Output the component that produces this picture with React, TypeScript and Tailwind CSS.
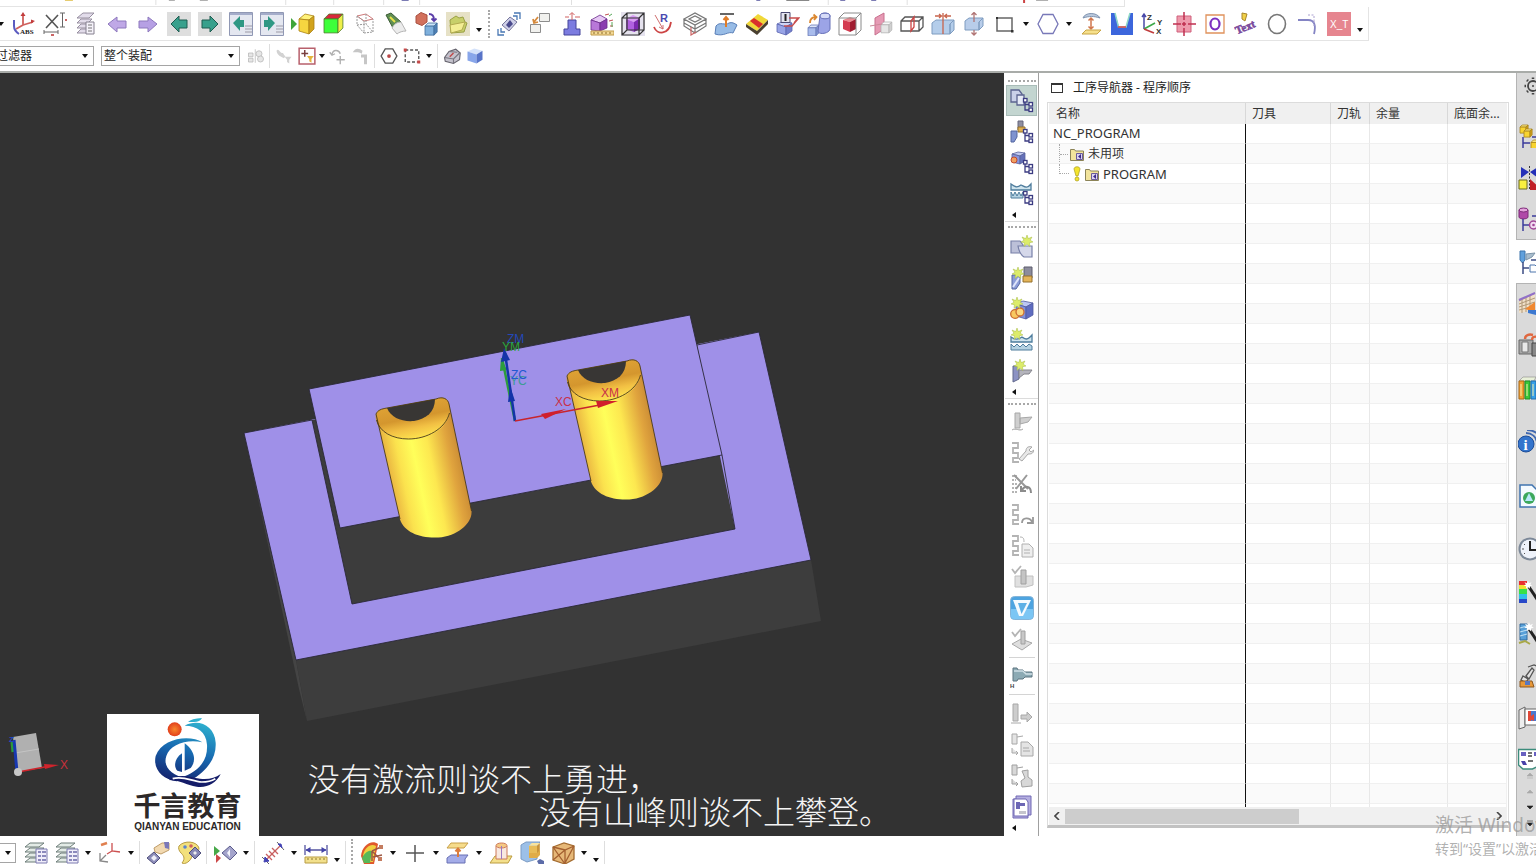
import React from "react";

type CubeProps = {
  x: number;
  y: number;
  s: number;
  top: string;
  front: string;
  side: string;
  line?: string;
};

// small shaded box used by most of the modelling icons
function Cube({ x, y, s, top, front, side, line = "none" }: CubeProps) {
  const d = s * 0.35;
  return (
    <g stroke={line} strokeWidth="0.8" strokeLinejoin="round">
      <path d={`M${x} ${y + d}l${d} ${-d}h${s}l${-d} ${d}z`} fill={top} />
      <path d={`M${x} ${y + d}h${s}v${s}h${-s}z`} fill={front} />
      <path d={`M${x + s} ${y + d}l${d} ${-d}v${s}l${-d} ${d}z`} fill={side} />
    </g>
  );
}

const star = "M0-6l1.3 3.6L5-4 3.200-.8 6 1 2.600 1.700 2.800 5.500 0 3l-3 2.400.4-3.700L-6 1l3-1.700L-5-4l3.700 1.600z";

const tree = (
  <g fill="#fff" stroke="#3c3c82" strokeWidth="1.300">
    <path d="M15 12v9h4M15 15.500h4" fill="none" />
    <rect x="13.500" y="9.500" width="3.500" height="3.500" />
    <rect x="19" y="13.500" width="3.500" height="3.500" />
    <rect x="19" y="19" width="3.500" height="3.500" />
  </g>
);

const snake = (
  <path d="M2 2h6v5H3v5h5v5H3v4h6" fill="none" stroke="#b4b4b4" strokeWidth="1.800" />
);

const greenArrowLeft = "M2 12l8-8v4h8v8h-8v4z";
const greenArrowRight = "M22 12l-8-8v4H6v8h8v4z";

const icons: Record<string, React.ReactNode> = {
  abs: (
    <>
      <path d="M11 3v10l-7 4M11 13l10-3" fill="none" stroke="#d0605c" strokeWidth="1.800" />
      <path d="M11 0l2.500 4h-5zM23 9l-4-1.500v4z" fill="#c23c3c" />
      <path d="M2 8v6c0 4 2 6 5 8" fill="none" stroke="#5b5bc0" strokeWidth="2" />
      <text x="8" y="22" fontSize="7" fontWeight="bold" fontFamily="Liberation Serif, serif" fill="#222">ABS</text>
    </>
  ),
  dim: (
    <>
      <path d="M3 3l12 13M15 3L3 16" stroke="#555" strokeWidth="1.600" />
      <path d="M17 1h5M17 15h5M19.500 1v14M1 18v4M15 18v4M1 20h14" stroke="#666" fill="none" />
      <path d="M22 8h2M8 23h3" stroke="#c66" strokeWidth="2" />
    </>
  ),
  list: (
    <>
      <path d="M3 6l6-5h11l-5 5zM3 11l4-4h11l-4 4zM3 16l4-4h10l-4 4zM3 21l4-4h10l-4 4z" fill="#e2dcea" stroke="#8e8798" strokeWidth="0.900" />
      <path d="M12 10h8v12h-8z" fill="#f5f2fa" stroke="#85808f" />
      <path d="M14 13h4M14 16h4M14 19h4" stroke="#777" />
    </>
  ),
  back: <path d="M3 12l9-7v4h9v7h-9v4z" fill="#bfa8e6" stroke="#8d78bd" />,
  forward: <path d="M21 12l-9-7v4H3v7h9v4z" fill="#b6a0e4" stroke="#8d78bd" />,
  prev: (
    <>
      <path d="M0 0h24v24H0z" fill="#dedede" />
      <path d={greenArrowLeft} transform="translate(2 0)" fill="#38a08c" stroke="#1f5c50" />
    </>
  ),
  next: (
    <>
      <path d="M0 0h24v24H0z" fill="#dedede" />
      <path d={greenArrowRight} transform="translate(-2 0)" fill="#38a08c" stroke="#1f5c50" />
    </>
  ),
  prevWindow: (
    <>
      <path d="M.5.500h23v23H.5z" fill="#e4e7f0" stroke="#9098b4" />
      <path d="M1 2h22" stroke="#a5adca" strokeWidth="2" />
      <path d="M4 11l7-7v4h4v7h-4v4z" fill="#2f9884" />
      <path d="M16 14h7M16 17h7M16 20h7" stroke="#b4b4be" strokeWidth="1.600" />
    </>
  ),
  nextWindow: (
    <>
      <path d="M.5.500h23v23H.5z" fill="#e4e7f0" stroke="#9098b4" />
      <path d="M1 2h22" stroke="#a5adca" strokeWidth="2" />
      <path d="M15 11L8 4v4H4v7h4v4z" fill="#2f9884" />
      <path d="M16 14h7M16 17h7M16 20h7" stroke="#b4b4be" strokeWidth="1.600" />
    </>
  ),
  showBody: (
    <>
      <path d="M0 6l6 6-6 6z" fill="#3fa53b" />
      <path d="M8 7l6-5 9 2-5 4z" fill="#fff27a" stroke="#a98214" strokeWidth="0.800" />
      <path d="M8 7l10 1v14L8 19z" fill="#f6d640" stroke="#a98214" strokeWidth="0.800" />
      <path d="M18 8l5-4v13l-5 5z" fill="#d2a31c" stroke="#a98214" strokeWidth="0.800" />
    </>
  ),
  colorCube: <Cube x={2} y={2} s={14} top="#d8283c" front="#3dff3a" side="#efef4a" line="#4c7a2c" />,
  wire: (
    <g fill="none">
      <path d="M4 4l9-2 7 5-9 2z" stroke="#cf7a7a" />
      <path d="M4 4v9l7 8V9zM11 21l9-1V7M13 2v10l7 8M4 13l9-1" stroke="#9a9a9a" strokeDasharray="2 1" />
    </g>
  ),
  torch: (
    <>
      <path d="M2 3l5-2 10 9-8 6z" fill="#5f8f52" stroke="#3c5b36" />
      <path d="M6 5l5 5" stroke="#e8e04a" strokeWidth="2" />
      <path d="M8 16c2-4 5-6 9-6l5 9c-3 0-7 1-9 3z" fill="#ececec" stroke="#b5b5b5" />
    </>
  ),
  replace: (
    <>
      <path d="M1 4l5-3.500L12 3v7l-5 3.500L1 11z" fill="#d2705c" stroke="#a85040" />
      <path d="M14 2c4 0 5 2 5 6M16.500 6.500L19 9l2.500-2.500" fill="none" stroke="#5a3ca8" strokeWidth="1.800" />
      <Cube x={10} y={11} s={9} top="#cbe3f6" front="#7fb0dc" side="#4e80b4" line="#3f6c9c" />
    </>
  ),
  folder: (
    <>
      <path d="M0 0h24v24H0z" fill="#e6e1c6" />
      <path d="M4 8l6-4 3 2 4-1 2 5 2 1-3 9-13 1z" fill="#c7cf6a" stroke="#9aa044" />
      <path d="M4 13l15-3-3 8-11 3z" fill="#f3ee94" stroke="#b2ab50" />
    </>
  ),
  moveFace: (
    <>
      <path d="M5 13l8-8 7 5-8 9z" fill="#cfd0e8" stroke="#77779c" />
      <path d="M9 13l4-5 3 4-4 4z" fill="#4a4a8c" />
      <path d="M17 1l6 0v6M16 4l4 0v4M1 17v6h6M4 16v4h4" fill="none" stroke="#4a78b4" strokeWidth="1.300" />
    </>
  ),
  copyFace: (
    <>
      <path d="M11.500 1.500h10v8h-10zM2.500 12.500h10v8h-10z" fill="#f1f1ee" stroke="#8d8d8d" />
      <path d="M10 5l-4 5M5 7l1 4 4-1" fill="none" stroke="#d68a3c" strokeWidth="1.800" />
    </>
  ),
  emboss: (
    <>
      <path d="M9 8h8v9h4v6H5v-6h4z" fill="#7c7ce0" stroke="#44449a" />
      <path d="M13 8V1M10.500 3L13 .5 15.500 3M6 5h4M16 5h5" fill="none" stroke="#d06060" />
    </>
  ),
  measureBody: (
    <>
      <path d="M1 8l9-5 7 4-7 4z" fill="#e6c8f4" stroke="#6b2c8c" strokeWidth="0.800" />
      <path d="M1 8l9 3v8l-9-1z" fill="#b878d8" stroke="#6b2c8c" strokeWidth="0.800" />
      <path d="M10 11l7-4v9l-7 3z" fill="#8a3cb0" stroke="#6b2c8c" strokeWidth="0.800" />
      <path d="M1 19h23v4H1z" fill="#f2d896" stroke="#c09a48" />
      <path d="M4 20v2M8 20v2M12 20v2M16 20v2M20 20v2" stroke="#8c6c2c" />
      <path d="M15 3l4-1M19 9l4-1M20 14l3 0" stroke="#c05050" />
      <path d="M19 4l3-2M22 10v5" stroke="#58a858" />
    </>
  ),
  boundBox: (
    <>
      <path d="M0 0h24v24H0z" fill="#e5e2ee" />
      <path d="M5 7l7-4 7 3-6 4z" fill="#d89af4" />
      <path d="M5 7l8 3v10l-8-3z" fill="#b060e0" />
      <path d="M13 10l6-4v11l-6 3z" fill="#7c28b0" />
      <path d="M1 6l5-5h17v17l-5 5H1zM1 6h17v17M18 6l5-5M6 1v17L1 23M6 18h17" fill="none" stroke="#333" strokeWidth="1.200" />
    </>
  ),
  radius: (
    <>
      <path d="M2 15c3 8 15 8 17-5" fill="none" stroke="#cc4444" strokeWidth="1.800" />
      <path d="M3 3l8 14M11 17v-4M11 17l-4-2" fill="none" stroke="#d07070" />
      <text x="8" y="10" fontSize="11" fontWeight="bold" fontFamily="Liberation Sans, sans-serif" fill="#4a4ab0">R</text>
    </>
  ),
  frame: (
    <g fill="none" stroke="#777" strokeWidth="1.200">
      <path d="M1 7l11-6 11 6-11 6zM6 7l6-3 6 3-6 3zM1 7v7l11 7 11-7V7M12 13v8M1 11l11 6 11-6" />
      <path d="M8 15v8l5-3" stroke="#c66" />
    </g>
  ),
  offsetSurf: (
    <>
      <path d="M6 2h14" stroke="#666" strokeWidth="2" />
      <path d="M2 14c4-5 9 0 13-3 3-1 5 0 8 2l-4 8c-5-2-9 4-18 1z" fill="#98bce6" stroke="#5a7fb8" />
      <path d="M12 15V5M9.500 8L12 5l2.500 3" fill="none" stroke="#e07c28" strokeWidth="2" />
    </>
  ),
  stripes: (
    <>
      <path d="M1 12L13 2l10 6-11 11z" fill="#f0d838" />
      <path d="M5 9L9 6l9 6-4 4z" fill="#d8302c" />
      <path d="M1 12l11 7v4L1 15zM12 19L23 8v4L12 23z" fill="#4a4030" />
    </>
  ),
  datumBox: (
    <>
      <path d="M1 12l7-3 8 2-6 4z" fill="#cfd5f6" stroke="#5b64b0" strokeWidth="0.800" />
      <path d="M1 12l9 3v8l-9-3z" fill="#98a4e6" stroke="#5b64b0" strokeWidth="0.800" />
      <path d="M10 15l6-4v8l-6 4z" fill="#7480cc" stroke="#5b64b0" strokeWidth="0.800" />
      <path d="M5 .500h9v10H5z" fill="#e4e4f0" stroke="#4a4a72" />
      <path d="M9.500 2v7" stroke="#222" strokeWidth="2" />
      <path d="M8 14h8l7-8H13M18 11l4-5" fill="none" stroke="#c84c4c" strokeWidth="1.300" />
    </>
  ),
  resize: (
    <>
      <Cube x={1} y={13} s={8} top="#dde6fa" front="#a9bcec" side="#7e92d0" line="#6878b8" />
      <path d="M13 4c0-4 10-4 10 0v13c-1 5-12 6-12 2z" fill="#9ca4e6" stroke="#6670b8" />
      <ellipse cx="18" cy="4" rx="5" ry="2.800" fill="#d7dcf8" stroke="#6670b8" />
      <path d="M3 11c0-4 2-6 6-6M6.500 2.500L9.500 5 7 8" fill="none" stroke="#dc8830" strokeWidth="1.800" />
    </>
  ),
  redBody: (
    <>
      <path d="M5 8l7-3 6 2-6 3z" fill="#ec8a90" />
      <path d="M5 8l7 2v10l-7-3z" fill="#d43c50" />
      <path d="M12 10l6-3v10l-6 3z" fill="#a01c30" />
      <path d="M1 6l5-5h17v17l-5 5H1zM1 6h17v17M18 6l5-5" fill="none" stroke="#8a8a8a" />
    </>
  ),
  section: (
    <>
      <path d="M6 6l9-5v16l-9 6z" fill="#e69ab4" stroke="#c8708e" />
      <Cube x={12} y={10} s={8} top="#f8f8f8" front="#e6e6e6" side="#d0d0d0" line="#b4b4b4" />
      <path d="M1 14l12-2" stroke="#cc8899" />
    </>
  ),
  splitWire: (
    <g fill="none" stroke="#555" strokeWidth="1.300">
      <path d="M1 9l4-4h18v10l-4 4H1zM1 9h18v10M19 9l4-4" />
      <path d="M11 19V9l3-4v10z" stroke="#c44" />
    </g>
  ),
  splitBody: (
    <>
      <path d="M1 11l4-3h18l-4 4v10H1zM19 12l4-4v10l-4 4z" fill="#b4cdea" stroke="#7f9cc0" />
      <path d="M12 1v21M4 4h6M20 4h-6M8 2l2.500 2L8 6M16 2l-2.500 2L16 6" fill="none" stroke="#c8644c" strokeWidth="1.300" />
    </>
  ),
  extend: (
    <>
      <path d="M3 9l4-3h14l-4 4v8H3zM17 10l4-4v8l-4 4z" fill="#b8cdea" stroke="#7f9cc0" />
      <path d="M12 1v9M9.500 3L12 .5 14.500 3M12 18v5M9.500 20.500L12 23l2.500-2.500" fill="none" stroke="#b07474" strokeWidth="1.300" />
    </>
  ),
  rect: (
    <>
      <path d="M4 6h15v13H4z" fill="none" stroke="#666" strokeWidth="1.500" />
      <path d="M3 5h2v2H3zM18 18h2.500v2.500H18z" fill="#333" />
    </>
  ),
  hexagon: <path d="M7 2.500h10l5 9.500-5 9.500H7L2 12z" fill="none" stroke="#7878b8" strokeWidth="1.300" />,
  project: (
    <>
      <path d="M4 6c2-6 14-6 17 0-6-2-11-2-17 0z" fill="#b9c8dc" stroke="#8094b0" />
      <path d="M12 6v11M9.500 8.500L12 6l2.500 2.500M9.500 14.500L12 17l2.500-2.500" fill="none" stroke="#d0764c" strokeWidth="1.500" />
      <path d="M7 18h15l-4 4H3z" fill="#f6e08c" stroke="#c8a444" />
    </>
  ),
  pocket: (
    <>
      <path d="M1 1h4l4 14h7l4-14h3v22H1z" fill="#3c66dc" />
      <path d="M5 1l3.500 14h7.500L20 1" fill="none" stroke="#8fd8c8" strokeWidth="1.500" />
      <path d="M8 15h8" stroke="#d44" strokeWidth="1.500" />
    </>
  ),
  csys: (
    <>
      <path d="M3 17V3M1 5l2-3 2 3" fill="none" stroke="#4848a8" strokeWidth="1.500" />
      <path d="M3 17l11-6" stroke="#3ca848" strokeWidth="1.600" />
      <path d="M3 17l10 4" stroke="#c03c3c" strokeWidth="1.600" />
      <g fontSize="8" fontWeight="bold" fontFamily="Liberation Sans, sans-serif" fill="#333">
        <text x="6" y="8">Z</text>
        <text x="16" y="13">Y</text>
        <text x="15" y="22">X</text>
      </g>
    </>
  ),
  center: (
    <>
      <path d="M5 4h14v16H5z" fill="#ee9aac" stroke="#d0607c" />
      <path d="M12 0v8M12 10v4M12 16v8M1 12h8M10 12h4M16 12h8" stroke="#c03050" strokeWidth="1.500" />
    </>
  ),
  hole: (
    <>
      <path d="M3 3h18v18H3z" fill="#fff" stroke="#e0925c" strokeWidth="1.300" />
      <ellipse cx="12" cy="12" rx="4.500" ry="5.500" fill="none" stroke="#7c30c0" strokeWidth="2.200" />
    </>
  ),
  text: (
    <>
      <text x="1" y="20" fontSize="11" fontWeight="bold" fontFamily="Liberation Serif, serif" fill="#7a4a9c" stroke="#7a4a9c" strokeWidth="0.600" transform="rotate(-22 8 16)">Text</text>
      <path d="M8 1l5 1-2 7-3-2z" fill="#f0d048" stroke="#a8862c" />
    </>
  ),
  circle: <ellipse cx="12" cy="12" rx="8.500" ry="9.500" fill="none" stroke="#777" strokeWidth="1.600" />,
  bridge: (
    <>
      <path d="M2 8h10c7 0 8 6 6 14" fill="none" stroke="#8484c4" strokeWidth="1.800" />
      <path d="M12 3h6v6M18 9v5" fill="none" stroke="#aaa0d0" strokeDasharray="2 1.500" />
    </>
  ),
  xt: (
    <>
      <path d="M0 0h24v24H0z" fill="#e6858f" />
      <text x="3" y="16" fontSize="10" fontFamily="Liberation Sans, sans-serif" fill="#fff">X_T</text>
    </>
  ),

  // selection bar
  assembly: (
    <g fill="#e6e6e6" stroke="#b5b5b5">
      <path d="M2 8h6v5H2zM2 15h6v5H2zM11 3v18" />
      <circle cx="16" cy="9" r="4" />
      <circle cx="18" cy="16" r="4" />
    </g>
  ),
  wrenchFilter: (
    <g fill="#d2d2d2">
      <path d="M2 5c3-4 4 2 7 3 3-1 2 3 5 4l-2 3C9 13 3 12 2 5z" />
      <path d="M13 13h9l-3 4v5l-3-2v-3z" />
    </g>
  ),
  addFilter: (
    <>
      <path d="M1.500 1.500h21v21h-21z" fill="#fff" stroke="#b8606c" strokeWidth="2" />
      <path d="M9 4v9M4.500 8.500h9" stroke="#7a4040" strokeWidth="2" />
      <path d="M12 12h9l-3 4v5l-3-2v-3z" fill="#e4b43c" />
    </>
  ),
  undoPoint: (
    <g fill="none" stroke="#b0b0b0" strokeWidth="1.800">
      <path d="M4 10c1-7 9-7 11-1M1 7l3 4 4-2M15 12v11M10 17h11" />
    </g>
  ),
  listPoint: (
    <g fill="#c6c6c6">
      <path d="M1 7c4-7 9-5 13-2l-1 4C9 6 5 7 1 7zM12 10h8v13h-4v-9h-4z" />
    </g>
  ),
  snap: (
    <>
      <path d="M7 2.500h10l5.500 9.500-5.500 9.500H7L1.500 12z" fill="none" stroke="#555" strokeWidth="1.800" />
      <circle cx="12" cy="12" r="2.500" fill="#b84848" />
    </>
  ),
  lasso: (
    <>
      <path d="M3 4h18v16H3z" fill="none" stroke="#555" strokeWidth="1.800" strokeDasharray="4 2.500" />
      <path d="M1 2h4v4H1zM19 18h4v4h-4z" fill="#c84848" />
    </>
  ),
  grayBody: (
    <>
      <path d="M2 14L8 6l9-3 6 5-1 9-8 5-11-3z" fill="#c4c2cc" stroke="#66646e" strokeWidth="1.500" />
      <path d="M2 14l12 2 8-8M14 16v6M8 6l11 1" fill="none" stroke="#77757f" strokeWidth="1.500" />
      <path d="M9 13l5-5" stroke="#c04848" strokeWidth="2" />
    </>
  ),
  blueCube: (
    <>
      <path d="M2 6l9-4 11 3-8 5z" fill="#d4e2fa" />
      <path d="M2 6l12 4v12L2 18z" fill="#88a6ea" />
      <path d="M14 10l8-5v12l-8 5z" fill="#5874c8" />
    </>
  ),

  // machining toolbar
  navProgram: (
    <>
      <path d="M1 1h8l3 4v8H1z" fill="#c9d0e8" stroke="#5c6490" strokeWidth="1.300" />
      <path d="M7 6h7v10H7z" fill="#e6eaf6" stroke="#5c6490" strokeWidth="1.300" />
      {tree}
    </>
  ),
  navTool: (
    <>
      <path d="M8 1h5v9H8z" fill="#8f8fa0" stroke="#66667c" />
      <path d="M8 7h7v5H8z" fill="#e0b052" stroke="#94702c" />
      <path d="M1 11h6v6l-3 5H1z" fill="#7f93d0" stroke="#5566a0" />
      {tree}
    </>
  ),
  navGeometry: (
    <>
      <path d="M2 3l6-2 7 1-5 3z" fill="#c2caf0" stroke="#58629c" strokeWidth="0.800" />
      <path d="M2 3l8 2v8l-8-2z" fill="#8894dc" stroke="#58629c" strokeWidth="0.800" />
      <path d="M10 5l5-3v8l-5 3z" fill="#6470b8" stroke="#58629c" strokeWidth="0.800" />
      <circle cx="4" cy="9" r="3" fill="#f0a060" stroke="#c04c30" />
      {tree}
    </>
  ),
  navMethod: (
    <>
      <path d="M1 2v6h20V2c-4 5-6 3-10 1-4 3-6 2-10-1z" fill="#cfe4ee" stroke="#4e7c9c" strokeWidth="1.300" />
      <path d="M1 16v-6l2 4 2-4 2 4 2-4 2 4 2-4v6z" fill="#b5d2e2" stroke="#4e7c9c" />
      {tree}
    </>
  ),
  newProgram: (
    <>
      <path d="M1 6h9l3 4v8H1z" fill="#bcc0d8" stroke="#7880a8" strokeWidth="1.200" />
      <path d="M8 11h14v11h-8c-3-2-5-5-6-11z" fill="#d5d8ea" stroke="#7880a8" strokeWidth="1.200" />
      <path d={star} transform="translate(17 6)" fill="#dcec6a" stroke="#a4b848" strokeWidth="0.500" />
    </>
  ),
  newTool: (
    <>
      <path d="M14 1h8v11h-8z" fill="#8c8c9c" stroke="#5c5c6c" />
      <path d="M13 10h9v6h-9z" fill="#e4b458" stroke="#94702c" />
      <path d="M2 9h8v8l-4 6H2z" fill="#8c9cd8" stroke="#5566a0" />
      <path d="M3 21l6-9" stroke="#dfe5fa" strokeWidth="2" />
      <path d={star} transform="translate(8 7)" fill="#dcec6a" stroke="#a4b848" strokeWidth="0.500" />
    </>
  ),
  newGeometry: (
    <>
      <path d="M6 7l7-3 10 2-7 4z" fill="#bcc6f4" stroke="#505aa0" strokeWidth="0.800" />
      <path d="M6 7l10 3v12l-10-3z" fill="#8090dc" stroke="#505aa0" strokeWidth="0.800" />
      <path d="M16 10l7-4v12l-7 4z" fill="#5f6cc0" stroke="#505aa0" strokeWidth="0.800" />
      <circle cx="5" cy="17" r="4.300" fill="#f8c860" stroke="#cc6c30" strokeWidth="1.300" />
      <circle cx="10" cy="15" r="4" fill="#fbd880" stroke="#cc6c30" strokeWidth="1.300" />
      <path d={star} transform="translate(7 6)" fill="#dcec6a" stroke="#a4b848" strokeWidth="0.500" />
    </>
  ),
  newMethod: (
    <>
      <path d="M1 9v5h21V7c-5 6-7 4-10 2-4 3-7 3-11 0z" fill="#cfe4ee" stroke="#4e7c9c" strokeWidth="1.300" />
      <path d="M1 22v-6l3 3 3-3 3 3 3-3 3 3 3-3 3 2v4z" fill="#b5d2e2" stroke="#4e7c9c" />
      <path d={star} transform="translate(7 6)" fill="#dcec6a" stroke="#a4b848" strokeWidth="0.500" />
    </>
  ),
  newOperation: (
    <>
      <path d="M3 7h6v13l-6 3z" fill="#8c92c4" stroke="#62688c" />
      <path d="M9 11l13 0-3 4-5 0-5 4z" fill="#b4b4bc" stroke="#84848c" />
      <path d={star} transform="translate(10 6)" fill="#dcec6a" stroke="#a4b848" strokeWidth="0.500" />
    </>
  ),
  toolGray: (
    <g fill="#cfcfcf" stroke="#a8a8a8">
      <path d="M5 3h5v15H5zM10 8l12-1-4 5-8 2zM2 20c4-3 7 2 11-1" />
    </g>
  ),
  pathWrench: (
    <>
      {snake}
      <path d="M9 18l7-8c0-4 3-5 6-4l-3 3 2 2 3-2c-1 4-3 4-6 4l-6 7z" fill="#e8e8e8" stroke="#a8a8a8" />
    </>
  ),
  pathDelete: (
    <>
      <path d="M2 4h6M2 8h4M2 12h5M2 16h5M2 20h6" stroke="#b4b4b4" strokeWidth="2" strokeDasharray="2 1" />
      <path d="M4 3l14 14M17 3L6 17" stroke="#999" strokeWidth="2" />
      <path d="M12 18c3-5 9-4 9 3M11 14v5h5" fill="none" stroke="#8c8c8c" strokeWidth="2" />
    </>
  ),
  pathRedo: (
    <>
      {snake}
      <path d="M12 20c0-6 8-6 10-1M23 14v6h-6" fill="none" stroke="#999" strokeWidth="1.800" />
    </>
  ),
  pathDoc: (
    <>
      {snake}
      <path d="M12 10h7l4 4v9H12z" fill="#eee" stroke="#b0b0b0" />
      <path d="M14 16h6M14 19h6M10 3c3 0 4 1 4 5" fill="none" stroke="#b0b0b0" />
    </>
  ),
  verify: (
    <>
      <path d="M2 4l3 4 6-7" fill="none" stroke="#b4b4b4" strokeWidth="1.800" />
      <path d="M5 11h18v9l-7 2H5z" fill="#e0e0e0" stroke="#c0c0c0" />
      <path d="M11 5h5v14h-5z" fill="#c4c4c4" stroke="#a0a0a0" />
    </>
  ),
  vericut: (
    <>
      <rect x="0.500" y="0.500" width="23" height="23" rx="4" fill="#4ea4e0" stroke="#84b4d8" />
      <path d="M1 13h22v7c0 2-1 3-3 3H4c-2 0-3-1-3-3z" fill="#7cc6f4" />
      <path d="M3 4h18l-8 16H9z" fill="#f4fafe" />
      <path d="M8 7h9l-5.500 11z" fill="#5cb0e6" />
    </>
  ),
  simulate: (
    <>
      <path d="M2 5l3 4 6-7" fill="none" stroke="#b4b4b4" strokeWidth="1.800" />
      <path d="M2 17l9-5 11 4-10 7z" fill="#dedede" stroke="#a8a8a8" />
      <path d="M11 4h4v13h-4z" fill="#c8c8c8" stroke="#a0a0a0" />
    </>
  ),
  holder: (
    <>
      <path d="M3 3h4l1 2h5l2 2h7v5h-7l-2 2H8l-1 2H3z" fill="#8caab4" stroke="#5c7480" />
      <path d="M4 6h9l3 3h6" fill="none" stroke="#d0e0e6" strokeWidth="1.500" />
      <text x="0" y="23" fontSize="6" fontWeight="bold" fontFamily="Liberation Sans, sans-serif" fill="#444">H</text>
    </>
  ),
  toolMove: (
    <g fill="#cdcdcd" stroke="#a8a8a8">
      <path d="M3 2h5v17H3zM11 13h6v-3l5 5-5 5v-3h-6zM1 21h10" />
    </g>
  ),
  toolDoc: (
    <g fill="#e4e4e4" stroke="#a8a8a8">
      <path d="M2 1h5v10H2zM7 4l6-1M2 15v5h6M6 18l2 2-2 2" />
      <path d="M11 9h7l5 5v9H11z" />
      <path d="M13 15h6M13 18h7" />
    </g>
  ),
  toolMachine: (
    <g fill="#d8d8d8" stroke="#a0a0a0">
      <path d="M2 1h5v10H2zM7 4l6-1M2 15v5h6M6 18l2 2-2 2" />
      <path d="M12 7l6-1v7l4 3v6l-10 1-1-6 4-3z" />
    </g>
  ),
  shopDoc: (
    <>
      <path d="M6 1h15v19h-3v3H3V4h3z" fill="#b4aee0" stroke="#7068b4" />
      <path d="M4 4h12l2 3v14H4z" fill="#fff" stroke="#7068b4" />
      <path d="M6 7v7h4v-3h5V8h-5V7z" fill="#6c66b4" />
      <path d="M9 16h7v3H9z" fill="#c4c4cc" />
    </>
  ),

  // bottom toolbar
  layerStack: (
    <>
      <path d="M1 6l5-4h14l-5 4zM1 11l5-4h14l-5 4zM1 16l5-4h14l-5 4zM1 21l5-4h14l-5 4z" fill="#e3ebe6" stroke="#6c7c78" />
      <path d="M12 8h11v14H12z" fill="#f0eefa" stroke="#7c7ab0" />
      <path d="M14 11h3M14 15h3M14 19h3M18 11h4M18 15h4M18 19h4" stroke="#6a68a8" strokeWidth="1.300" />
    </>
  ),
  wcs: (
    <g fill="none" strokeWidth="1.300">
      <path d="M14 2v8l8 1M14 10l-5 3" stroke="#cc5050" />
      <path d="M2 12v8l8 1M2 20l6-6" stroke="#888" />
      <path d="M3 4l6-2" stroke="#e08050" strokeWidth="2.500" />
    </g>
  ),
  pickFace: (
    <>
      <path d="M8 7l8-5h7v7l-8 4-6-2z" fill="#f2d9b0" stroke="#bf9c68" />
      <path d="M18 1l5 0v7l-4-1z" fill="#7b78b8" />
      <path d="M1 17l7-6 6 6-6 6z" fill="#8c8cb8" stroke="#50507c" />
      <path d="M5 17l3-3 3 3-3 3z" fill="#eeeef8" />
    </>
  ),
  palette: (
    <>
      <path d="M2 5c5-6 18-5 20 2 0 5-6 4-7 8-1 5-7 9-10 7 4-5 1-8-1-10-2-2-3-5-2-7z" fill="#f2e07c" stroke="#b89c44" />
      <circle cx="8" cy="6" r="1.800" fill="#5b84d0" />
      <circle cx="14" cy="5" r="1.800" fill="#d06060" />
      <path d="M12 12l6-6 6 6-6 6z" fill="#8888b4" stroke="#50507c" />
      <path d="M16 12l2-2 2 2-2 2z" fill="#eee" />
    </>
  ),
  playFace: (
    <>
      <path d="M1 5l6 5-6 5z" fill="#46a848" />
      <path d="M3 13l5 4-5 5z" fill="#cc4848" />
      <path d="M9 12l8-7 7 7-7 7z" fill="#a4a4cc" stroke="#5c5c8c" />
      <path d="M14 12l3-4v8z" fill="#f4f4fc" />
    </>
  ),
  spring: (
    <>
      <path d="M4 20L20 4" stroke="#c86060" strokeWidth="1.300" />
      <path d="M5 13l6 6M8 10l6 6M11 7l6 6" stroke="#c86060" strokeWidth="1.300" />
      <path d="M16 1l7 8M1 16l7 7" stroke="#666" />
      <path d="M17 3l4 4-1-4zM3 21l5-1-4-4z" fill="#4444b4" stroke="#4444b4" />
    </>
  ),
  ruler: (
    <>
      <path d="M1 4v10M23 4v10M2 9h20" stroke="#5454a0" strokeWidth="1.300" />
      <path d="M1.500 9l5-3v6zM22.500 9l-5-3v6z" fill="#4444a8" />
      <path d="M1 16h22v6H1z" fill="#f2e08c" stroke="#b89c44" />
      <path d="M4 17v2M8 17v2M12 17v2M16 17v2M20 17v2" stroke="#8c7830" />
    </>
  ),
  colorMap: (
    <>
      <path d="M1 15C2 4 12-2 18 3l-4 20H4z" fill="#e0582c" />
      <path d="M3 14C5 6 11 2 16 5l-3 16H6z" fill="#f0d040" />
      <path d="M2 17c3-6 7-8 10-7l-2 12H4z" fill="#58b858" />
      <path d="M12 10l9-4M12 10l8 8M13 16l9-2M12 10v10" stroke="#9c5844" strokeWidth="1.500" />
      <path d="M19 4h4v4h-4zM18 16h4v4h-4z" fill="#c47c60" />
    </>
  ),
  plus: <path d="M12 4v17M3 12h18" stroke="#555" strokeWidth="1.500" />,
  extrudeUp: (
    <>
      <path d="M5 2h17l-4 5H1z" fill="#f6dc8c" stroke="#c8a048" />
      <path d="M1 17l4-3h17l-3 4v4H1z" fill="#a4ace8" stroke="#6870b4" />
      <path d="M12 16V8M9.500 10.500L12 7.500l2.500 3" fill="none" stroke="#dc7c3c" strokeWidth="2" />
    </>
  ),
  cylinder: (
    <>
      <path d="M1 22l5-7h17l-4 7z" fill="#f4e08c" stroke="#bc9c40" />
      <path d="M7 5v13h11V5" fill="#f8e8e0" stroke="#cc7858" />
      <ellipse cx="12.500" cy="4.500" rx="5.500" ry="2.500" fill="#f4c884" stroke="#cc7858" />
      <path d="M12.500 5v13" stroke="#9c78c0" />
    </>
  ),
  layersBody: (
    <>
      <path d="M1 4l5-3h14l-3 3v14l-10 3-6-3z" fill="#9cc0e8" stroke="#7c9cc4" />
      <Cube x={9} y={2} s={8} top="#f8e4a0" front="#e8bc58" side="#c8943c" />
      <path d="M9 12h8l3-3v5l-3 3H9z" fill="#e0ac48" />
      <path d="M17 20l3-2 4 2v4h-5z" fill="#5c6ca8" />
    </>
  ),
  crate: (
    <>
      <path d="M2 6l11-4 10 3v13l-9 5-12-4z" fill="#e6b878" stroke="#a46c30" strokeWidth="1.300" />
      <path d="M2 6l12 3 9-4M14 9v14M2 6l12 17M14 9L2 19M14 22l9-17" fill="none" stroke="#a46030" strokeWidth="1.300" />
    </>
  ),

  // resource bar
  gear: (
    <>
      <circle cx="15" cy="12" r="5" fill="none" stroke="#444" strokeWidth="1.800" />
      <path d="M15 5v-1.500M15 20.500V19M8 12H6.500M10 7L9 6M10 17l-1 1" stroke="#444" strokeWidth="2.500" />
      <circle cx="15" cy="12" r="1" fill="#444" />
    </>
  ),
  resAssembly: (
    <>
      <Cube x={2} y={1} s={6} top="#fff08c" front="#f8d430" side="#d0a018" line="#a8841c" />
      <Cube x={6} y={5} s={6} top="#fff08c" front="#f8d430" side="#d0a018" line="#a8841c" />
      <path d="M5 13v11M5 19h7M14 13h10" stroke="#3c3c9c" strokeWidth="1.500" />
      <Cube x={13} y={16} s={7} top="#fff08c" front="#f8d430" side="#d0a018" line="#a8841c" />
    </>
  ),
  resConstraint: (
    <>
      <path d="M3 1l8 5-8 6zM20 1l-8 5 8 6z" fill="#2430b8" />
      <path d="M1 14h8v9H1z" fill="#f8f040" stroke="#6c6c20" />
      <path d="M12 13v11h12z" fill="#c02028" />
      <path d="M11.500 0v24" stroke="#333" strokeDasharray="2 1.500" />
    </>
  ),
  resPart: (
    <>
      <path d="M1 3v7c0 2.500 9 2.500 9 0V3z" fill="#b048a8" stroke="#7c2878" />
      <ellipse cx="5.500" cy="3" rx="4.500" ry="2" fill="#e4a4dc" stroke="#7c2878" />
      <path d="M5 12v12M5 18h6M14 9h10" stroke="#3c3c9c" strokeWidth="1.500" />
      <circle cx="15.500" cy="18" r="4" fill="#f0dcf0" stroke="#a04898" strokeWidth="1.500" />
      <circle cx="15.500" cy="18" r="1.300" fill="#a04898" />
    </>
  ),
  resOperation: (
    <>
      <path d="M2 1h5v9l-2.500 3L2 10z" fill="#60a0dc" stroke="#3c74ac" />
      <path d="M8 4l9-1-3 4-6 3z" fill="#a8bccc" stroke="#7c94a8" />
      <path d="M5 12v12M5 18h6M13 10h11" stroke="#3c4c84" strokeWidth="1.500" />
      <path d="M12 15h5l3 3v4h-8z" fill="#fff" stroke="#4c74ac" />
    </>
  ),
  resMachine: (
    <>
      <path d="M1 9L17 1v17L1 21z" fill="#f0e0c8" />
      <path d="M1 9l16-8M1 12l16-6M1 15l16-5M1 18l16-4M4 8v13M8 6v14M12 4v15" stroke="#b09878" />
      <path d="M1 8l16-7" stroke="#9070c8" strokeWidth="2" />
      <path d="M7 17l10-7v10z" fill="#f08830" />
      <path d="M10 18h8v5l-8-2z" fill="#3c78d0" />
    </>
  ),
  resReuse: (
    <>
      <path d="M1 7h14v14H1z" fill="#a8a8a8" stroke="#666" />
      <path d="M4 9h6v10H4z" fill="#e8e8e8" stroke="#777" />
      <path d="M14 10h5v13h-5z" fill="#888" stroke="#444" />
      <path d="M7 6c0-4 4-5 8-4M14 7c0-3 2-4 6-3" fill="none" stroke="#e06840" strokeWidth="2.500" />
    </>
  ),
  resLibrary: (
    <>
      <path d="M1 5l4-4h13l-2 4z" fill="#e8f0d8" stroke="#888" strokeWidth="0.600" />
      <path d="M1 5h5v18H1z" fill="#f0a030" stroke="#a86818" />
      <path d="M7 5h5v18H7z" fill="#38c838" stroke="#208c28" />
      <path d="M13 5h5v18h-5z" fill="#38a0e8" stroke="#206cac" />
      <path d="M3 8v12M9 8v12M15 8v12" stroke="#f8f0a8" />
    </>
  ),
  resInfo: (
    <>
      <circle cx="8" cy="14" r="8" fill="#3474cc" stroke="#1c4c98" />
      <text x="5.500" y="20" fontSize="15" fontWeight="bold" fontFamily="Liberation Serif, serif" fill="#fff">i</text>
      <path d="M8 3c6 0 10 4 11 9M9 0c7 0 12 4 14 10" fill="none" stroke="#4068b0" strokeWidth="1.800" />
    </>
  ),
  resPage: (
    <>
      <path d="M2 1h12l5 5v17H2z" fill="#f4faff" stroke="#4074b0" strokeWidth="1.500" />
      <circle cx="11" cy="14" r="6" fill="#3ca85c" />
      <path d="M11 9l4 8H7z" fill="#b8e8f8" />
    </>
  ),
  resClock: (
    <>
      <circle cx="12" cy="12" r="11.500" fill="#7c8898" />
      <circle cx="12" cy="12" r="9.500" fill="#eef2fa" />
      <path d="M12 4v9h6" fill="none" stroke="#222" strokeWidth="2" />
      <path d="M4 12h2M6 7l1 1M6 17l1-1" stroke="#555" />
    </>
  ),
  resColors: (
    <>
      <path d="M1 1h8v5H1z" fill="#e83030" />
      <path d="M1 5h8v5H1z" fill="#f0e030" />
      <path d="M1 9h8v6H1z" fill="#38e048" />
      <path d="M1 14h8v5H1z" fill="#30c0e8" />
      <path d="M1 19h8v4H1z" fill="#2848c8" />
      <path d="M11 7l10 15" stroke="#222" strokeWidth="3" />
      <path d={star} transform="translate(10 5) scale(.7)" fill="#fff" />
    </>
  ),
  resWizard: (
    <>
      <path d="M2 2h7v16H2z" fill="#58a0d8" stroke="#30689c" />
      <path d="M2 6l7-2M2 10l7-2M2 14l7-2" stroke="#c0e0f4" />
      <path d="M1 21l6-2 5 3" fill="none" stroke="#a8a848" strokeWidth="2" />
      <path d="M11 7l10 15" stroke="#222" strokeWidth="3" />
      <path d={star} transform="translate(11 5) scale(.8)" fill="#fff" />
    </>
  ),
  resRobot: (
    <>
      <path d="M10 3l6-2 5 2M8 12l6-8 2 2-5 9zM5 12l5 3-2 4-5-3z" fill="#e4e4e4" stroke="#555" strokeWidth="1.300" />
      <path d="M2 17h12l2 6H2z" fill="#e89838" stroke="#8c5820" />
      <path d="M7 17h5v4H7z" fill="#5878c0" />
    </>
  ),
  resDoor: (
    <>
      <path d="M1 4l6-3v20l-6 2z" fill="#eee" stroke="#666" />
      <path d="M7 3h15v16H7z" fill="#fff" stroke="#666" />
      <path d="M10 5h10v10H10z" fill="#4878d0" />
      <path d="M10 5h3v10h-3zM10 12l6-4v7z" fill="#e04838" />
    </>
  ),
  resDialog: (
    <>
      <path d="M.5 2.500h23V18l-5 2-4 2H5L.5 18z" fill="#fff" stroke="#3c8c7c" strokeWidth="1.500" />
      <path d="M3 5h5v4H3zM16 5h5v4h-5z" fill="#6860c0" />
      <path d="M10 6h4M10 9h4M10 14h5" stroke="#444" strokeWidth="1.300" />
      <path d="M3 14h4l2 4H5z" fill="#4840a8" />
    </>
  ),
};

function Icon({ name, small }: { name: string; small?: boolean }) {
  return (
    <svg viewBox="0 0 24 24" className={small ? "w-[18px] h-[18px]" : "w-6 h-6 shrink-0"} aria-hidden="true">
      {icons[name]}
    </svg>
  );
}

function Tool({ name, active }: { name: string; active?: boolean }) {
  return (
    <button
      aria-label={name}
      className={
        active
          ? "w-[31px] h-[31px] shrink-0 flex items-center justify-center bg-[#c3d5d0] border border-[#a9bcb8]"
          : "w-[31px] h-[31px] shrink-0 flex items-center justify-center"
      }
    >
      <Icon name={name} />
    </button>
  );
}

function SmallTool({ name }: { name: string }) {
  return (
    <button aria-label={name} className="w-[23px] h-6 shrink-0 flex items-center justify-center">
      <Icon name={name} small />
    </button>
  );
}

function Triangle() {
  return (
    <svg viewBox="0 0 6 4" className="w-[6px] h-1" aria-hidden="true">
      <path d="M0 0h6L3 4z" fill="#111" />
    </svg>
  );
}

function Drop({ low }: { low?: boolean }) {
  return (
    <button
      aria-label="more"
      className={low ? "w-3 h-[31px] shrink-0 flex items-end justify-center pb-[7px]" : "w-3 h-[31px] shrink-0 flex items-center justify-center"}
    >
      <Triangle />
    </button>
  );
}

function Grip() {
  return <span className="w-0 h-7 shrink-0 mx-[3px] border-l-2 border-dotted border-[#a8a8a8]" />;
}

function Divider() {
  return <span className="w-px h-6 shrink-0 mx-[2px] bg-[#dedede]" />;
}

function SideGrip() {
  return <span className="w-7 h-0 border-t-2 border-dotted border-[#a8a8a8]" />;
}

function SideMore() {
  return (
    <button aria-label="more" className="w-full h-[11px] flex items-center pl-[7px]">
      <svg viewBox="0 0 4 6" className="w-1 h-[6px]" aria-hidden="true">
        <path d="M4 0v6L0 3z" fill="#111" />
      </svg>
    </button>
  );
}

const tools = (names: string) => names.split(" ").map((n) => <Tool key={n} name={n} />);

function MainToolbar() {
  return (
    <div className="flex">
      <div className="flex items-center h-[34px] pr-[2px] border-b border-r border-[#e4e4e4]">
        <span className="w-2 shrink-0 overflow-hidden flex">
          <svg viewBox="0 0 6 4" className="w-[6px] h-1" aria-hidden="true">
            <path d="M-2 0h6L1 4z" fill="#111" />
          </svg>
        </span>
        {tools("abs dim list back forward prev next prevWindow nextWindow showBody colorCube wire torch replace folder")}
        <Drop low />
        <Grip />
        {tools("moveFace copyFace emboss measureBody boundBox radius frame offsetSurf stripes datumBox resize redBody section splitWire splitBody extend rect")}
        <Drop />
        <Tool name="hexagon" />
        <Drop />
        {tools("project pocket csys center hole text circle bridge xt")}
        <Drop low />
      </div>
    </div>
  );
}

function SelectionBar() {
  return (
    <div className="h-[30px] flex items-center">
      <label className="relative w-[94px] h-5 overflow-hidden border border-l-0 border-[#a5a5a5]">
        <select aria-label="过滤器" className="block w-full h-full -ml-1 appearance-none text-[12px] leading-[18px] text-[#222] bg-white outline-none">
          <option>过滤器</option>
        </select>
        <span className="absolute right-[5px] top-0 h-full flex items-center pointer-events-none">
          <Triangle />
        </span>
      </label>
      <label className="relative w-[139px] h-5 ml-[7px] border border-[#a5a5a5]">
        <select aria-label="范围" className="block w-full h-full pl-[2px] appearance-none text-[12px] leading-[18px] text-[#222] bg-white outline-none">
          <option>整个装配</option>
        </select>
        <span className="absolute right-[5px] top-0 h-full flex items-center pointer-events-none">
          <Triangle />
        </span>
      </label>
      <span className="w-1" />
      <SmallTool name="assembly" />
      <Divider />
      <SmallTool name="wrenchFilter" />
      <SmallTool name="addFilter" />
      <button aria-label="filter options" className="w-2 h-6 shrink-0 flex items-center justify-center">
        <Triangle />
      </button>
      <SmallTool name="undoPoint" />
      <SmallTool name="listPoint" />
      <Divider />
      <SmallTool name="snap" />
      <SmallTool name="lasso" />
      <Drop />
      <Divider />
      <SmallTool name="grayBody" />
      <SmallTool name="blueCube" />
    </div>
  );
}

// lower edge of the toolbar that is scrolled out above
function UpperEdge() {
  return (
    <div className="h-[7px] flex">
      <div className="w-[1125px] h-full border-b border-r border-[#e4e4e4]">
        <svg viewBox="0 0 1125 6" className="w-full h-full" aria-hidden="true">
          <path d="M65 0h8" stroke="#e6cc70" strokeWidth="2" />
          <path d="M169 0h6M200 0h8M792 0h5M1037 0h12" stroke="#b0b0b0" strokeWidth="2" />
          <path d="M156 0v5M286 0v5M334 0v5M384 0v5M420 0v5M572 0v5M829 0v5M908 0v5" stroke="#e0e0e0" />
          <path d="M402 0h7M757 0h4M841 0h5M872 0h5" stroke="#7c7cb4" strokeWidth="2" />
          <path d="M787 0h23" stroke="#888" strokeWidth="2" />
          <path d="M1025 0v3" stroke="#c44" strokeWidth="2" />
        </svg>
      </div>
    </div>
  );
}

function Boss() {
  return (
    <g>
      <path
        d="M376 414c2-4 5-5 11-6l49-9c7-3 12 0 13 5l22.500 107c1 12-14 25-33 26.500-18 1-34-5-38.500-18z"
        fill="url(#bossBody)"
      />
      <path
        d="M376 414c2-4 5-5 11-6l49-9c7-3 12 0 13 5 1 6 1 9 0 13-7 15-23 23-41 22-18-1-29-9-31-16-1-4-2-6-1-9z"
        fill="url(#bossRim)"
      />
      <path d="M387 408l48-9c0 13-9 20-21 22-12 1-23-3-27-13z" fill="#383634" />
      <path
        d="M400 519l-24-105c2-4 5-5 11-6l49-9c7-3 12 0 13 5l22.500 107M376.500 420c3 12 16 19 32 19 18 0 37-10 41-26"
        fill="none"
        stroke="#4a3a1c"
        strokeWidth="0.900"
      />
    </g>
  );
}

function Model() {
  return (
    <svg viewBox="0 73 1004 763" preserveAspectRatio="xMinYMin meet" className="block w-full h-full" aria-label="model">
      <defs>
        <linearGradient id="bossBody" gradientUnits="userSpaceOnUse" x1="386" y1="472" x2="462" y2="456">
          <stop offset="0" stopColor="#e6ac3e" />
          <stop offset="0.200" stopColor="#fbe24e" />
          <stop offset="0.400" stopColor="#ffff5a" />
          <stop offset="0.600" stopColor="#fde850" />
          <stop offset="0.850" stopColor="#e0a43e" />
          <stop offset="1" stopColor="#c98a34" />
        </linearGradient>
        <linearGradient id="bossRim" gradientUnits="userSpaceOnUse" x1="408" y1="400" x2="416" y2="440">
          <stop offset="0" stopColor="#e0a436" />
          <stop offset="0.450" stopColor="#d4962e" />
          <stop offset="0.700" stopColor="#f2c044" />
          <stop offset="1" stopColor="#ffe850" />
        </linearGradient>
      </defs>

      <path d="M244 433l52 227 11 61-8-32z" fill="#444" />
      <path d="M296 660l515-100 10 61-514 100z" fill="#3d3d3d" />
      <path d="M244 433l515-101 52 228-515 100z" fill="#9f90e8" />
      {/* pocket floor, and the gap behind the raised block */}
      <path d="M312 420l385-75 38 184-383 75z" fill="#3c3c3c" />
      <path d="M309 389l381-74 32 140-382 73z" fill="#9f90e8" />
      <path
        d="M296 660L244 433l68-13 40 184 383-75-13-74-32-140-381 74 31 139 382-73M697 345l62-13 52 228-515 100"
        fill="none"
        stroke="#2a2838"
        strokeWidth="0.900"
      />
      <Boss />
      <g transform="translate(191 -38)">
        <Boss />
      </g>

      <g strokeWidth="1.500">
        <path d="M515 421L502 358" stroke="#2c9c3c" strokeWidth="2.500" />
        <path d="M500 371l1-13 6 12z" fill="#2c9c3c" />
        <path d="M515 421l-10-68" stroke="#1434a8" strokeWidth="2.500" />
        <path d="M501 362l3-14 6 12zM508 402l2-16 5 15z" fill="#1434a8" />
        <path d="M515 421l90-17" stroke="#c8242c" />
        <path d="M541 414l25-5-21 10zM596 401l22 0-20 7z" fill="#d0202c" />
      </g>
      <g fontFamily="Liberation Sans, sans-serif" fontSize="12">
        <text x="507" y="343" fill="#2448b8">ZM</text>
        <text x="502" y="351" fill="#2ca43c">YM</text>
        <text x="510" y="385" fill="#3c9c94">YC</text>
        <text x="511" y="379" fill="#2458d0">ZC</text>
        <text x="555" y="406" fill="#c83048">XC</text>
        <text x="601" y="397" fill="#c83048">XM</text>
      </g>

      <path d="M13 737l23-4 6 35-25 4z" fill="#b0b0b0" />
      <path d="M15 753l24-4" stroke="#c4c4c4" />
      <path d="M12 742l1 10" stroke="#2c9c3c" strokeWidth="3" />
      <path d="M17 772l-3-32" stroke="#1838b0" strokeWidth="3" />
      <text x="9" y="742" fontSize="8" fontWeight="bold" fontFamily="Liberation Sans, sans-serif" fill="#2448c8">Z</text>
      <path d="M18 772l32-6" stroke="#d0242c" strokeWidth="1.500" />
      <path d="M44 764l15 1-14 4z" fill="#d0242c" />
      <circle cx="18" cy="772" r="4" fill="#c8c8c8" />
      <text x="60" y="769" fontSize="12" fontFamily="Liberation Sans, sans-serif" fill="#c8303c">X</text>
    </svg>
  );
}

function Logo() {
  return (
    <div className="absolute left-[107px] bottom-0 w-[152px] h-[122px] pl-[9px] pt-px bg-white flex flex-col items-center text-[#2c2828] overflow-hidden">
      <svg viewBox="450 45 225 225" className="w-[75px] h-[75px] shrink-0" aria-hidden="true">
        <defs>
          <linearGradient id="swoosh" gradientUnits="userSpaceOnUse" x1="600" y1="60" x2="540" y2="260">
            <stop offset="0" stopColor="#2fb4d0" />
            <stop offset="0.500" stopColor="#1768b0" />
            <stop offset="1" stopColor="#141c68" />
          </linearGradient>
          <radialGradient id="sun">
            <stop offset="0" stopColor="#f8862c" />
            <stop offset="1" stopColor="#e2401c" />
          </radialGradient>
        </defs>
        <circle cx="524" cy="88" r="21" fill="url(#sun)" />
        <g fill="url(#swoosh)">
          <path d="M564 66q10-10 42-12q-6 12-24 12z" />
          <path d="M554 77C595 55 644 76 647 128C650 178 615 218 570 242L540 234C596 216 624 182 621 134C618 94 592 78 554 77Z" />
          <path d="M607 127C572 103 487 112 467 168C458 208 488 238 530 244L560 236C514 226 488 200 499 168C510 134 560 116 607 127Z" />
          <path d="M554 130C584 152 590 182 572 204L554 212Z" />
          <path d="M546 160C524 174 520 200 532 212L546 216Z" />
        </g>
        <path d="M506 240C540 218 570 232 600 236C625 239 645 234 662 222C648 250 622 264 590 260C560 256 540 240 506 240Z" fill="#141c68" />
        <path d="M518 236C550 226 575 244 605 246C625 246 636 242 646 236" fill="none" stroke="#fff" strokeWidth="5" />
      </svg>
      <span className="text-[27px] leading-[31px] font-bold">千言教育</span>
      <span className="font-['Liberation_Sans',sans-serif] text-[10px] leading-3 font-bold whitespace-nowrap">QIANYAN EDUCATION</span>
    </div>
  );
}

function Viewport() {
  return (
    <main className="relative flex-1 min-w-0 bg-[#323232] overflow-hidden">
      <Model />
      <Logo />
      <p className="absolute left-[308px] bottom-2 text-[32px] leading-[33px] font-light text-[#f4f4f4] whitespace-nowrap">
        没有激流则谈不上勇进，
        <br />
        <span className="pl-[231px]">没有山峰则谈不上攀登。</span>
      </p>
    </main>
  );
}

function MachiningBar() {
  return (
    <aside className="w-[35px] shrink-0 flex flex-col items-center border-l border-r border-[#a0a0a0] border-l-white bg-white overflow-hidden">
      <div className="h-[149px] w-full shrink-0 flex flex-col items-center pt-[7px] border-b border-[#dcdcdc]">
        <SideGrip />
        <div className="pt-[3px]">
          <Tool name="navProgram" active />
          {tools("navTool navGeometry navMethod")}
        </div>
        <SideMore />
      </div>
      <div className="h-[177px] w-full shrink-0 flex flex-col items-center pt-1 border-b border-[#dcdcdc]">
        <SideGrip />
        <div className="pt-[3px]">{tools("newProgram newTool newGeometry newMethod newOperation")}</div>
        <SideMore />
      </div>
      <div className="w-full flex flex-col items-center pt-1">
        <SideGrip />
        <div className="pt-px">{tools("toolGray pathWrench pathDelete pathRedo pathDoc verify vericut simulate")}</div>
        <span className="w-[26px] h-px my-[3px] bg-[#d4d4d4]" />
        <Tool name="holder" />
        <span className="w-[26px] h-px mt-[2px] mb-[3px] bg-[#d4d4d4]" />
        {tools("toolMove toolDoc toolMachine shopDoc")}
        <SideMore />
      </div>
    </aside>
  );
}

function ProgramFolder() {
  return (
    <svg viewBox="0 0 14 13" className="w-[14px] h-[13px] shrink-0" aria-hidden="true">
      <path d="M.5 1.500h4l1 1.500h8v9.500H.5z" fill="#f2e49c" stroke="#8c8458" />
      <path d="M6.500 5.500h6v6h-6z" fill="#dcd4f0" stroke="#6a5c9c" />
      <path d="M11 6v5L8 8.500z" fill="#3c2c8c" />
    </svg>
  );
}

const columns = [
  { title: "刀具", width: "w-[85px]" },
  { title: "刀轨", width: "w-[39px]" },
  { title: "余量", width: "w-[78px]" },
  { title: "底面余...", width: "w-[60px]" },
];

const items = [
  <span className="pl-1">NC_PROGRAM</span>,
  <span className="flex items-center pl-[10px]">
    <span className="w-[9px] h-5 border-l border-dotted border-[#a8a8a8] flex items-center">
      <span className="w-full border-t border-dotted border-[#a8a8a8]" />
    </span>
    <span className="w-[2px]" />
    <ProgramFolder />
    <span className="pl-1 text-[12px] leading-[18px]">未用项</span>
  </span>,
  <span className="flex items-center pl-[10px]">
    <span className="w-[10px] h-5 flex items-start">
      <span className="w-full h-[10px] border-l border-b border-dotted border-[#a8a8a8]" />
    </span>
    <svg viewBox="0 0 8 16" className="w-2 h-4 mx-[4px]" aria-hidden="true">
      <path d="M1 3c0-3 6-3 6 0L5 10H3z" fill="#f4e42c" stroke="#a89c20" strokeWidth="0.700" />
      <circle cx="4" cy="13" r="2" fill="#f4e42c" stroke="#a89c20" strokeWidth="0.700" />
    </svg>
    <ProgramFolder />
    <span className="pl-1">PROGRAM</span>
  </span>,
];

function Navigator() {
  const rows = Array.from({ length: 35 }, (_, i) => items[i] ?? null);
  return (
    <section className="w-[477px] shrink-0 flex flex-col bg-white pl-2 pr-[7px] pb-2">
      <h2 className="h-[29px] shrink-0 flex items-center gap-[10px] pl-1 text-[12px] text-[#222]">
        <span className="w-3 h-[10px] border border-t-2 border-[#333]" />
        工序导航器 - 程序顺序
      </h2>
      <div className="flex-1 min-h-0 flex flex-col border border-[#dcdcdc] border-b-[3px] border-b-[#c2c2c2] px-px">
        <div className="flex-1 min-h-0 overflow-hidden">
          <table className="w-full table-fixed border-separate border-spacing-0 text-[#333]">
            <thead>
              <tr className="h-[21px] bg-[#f0f0f0] text-[12px] leading-5">
                <th className="text-left font-normal pl-[7px] py-0">名称</th>
                {columns.map((c) => (
                  <th key={c.title} className={c.width + " text-left font-normal pl-[6px] py-0 border-l border-[#d8d8d8] whitespace-nowrap"}>
                    {c.title}
                  </th>
                ))}
              </tr>
            </thead>
            <tbody>
              {rows.map((item, i) => (
                <tr key={i} className="h-5 even:bg-[#fafafa] text-[13px] leading-[19px]">
                  <td className="h-5 p-0 border-b border-[#f0f0f0] whitespace-nowrap">
                    <div className="h-[19px] overflow-hidden">{item}</div>
                  </td>
                  <td className="p-0 border-b border-l border-[#f0f0f0] border-l-[#111]" />
                  <td className="p-0 border-b border-l border-[#f0f0f0] border-l-[#e8e8e8]" />
                  <td className="p-0 border-b border-l border-[#f0f0f0] border-l-[#e8e8e8]" />
                  <td className="p-0 border-b border-l border-r border-[#f0f0f0] border-l-[#e8e8e8]" />
                </tr>
              ))}
            </tbody>
          </table>
        </div>
        <div className="h-[18px] shrink-0 flex items-center bg-[#f0f0f0]">
          <button aria-label="scroll left" className="w-4 h-full flex items-center justify-center">
            <svg viewBox="0 0 6 8" className="w-[6px] h-2" aria-hidden="true">
              <path d="M5 0L1 4l4 4" fill="none" stroke="#444" strokeWidth="1.600" />
            </svg>
          </button>
          <div className="flex-1 h-full flex items-center">
            <span className="w-[55%] h-[15px] bg-[#cdcdcd]" />
          </div>
          <button aria-label="scroll right" className="w-4 h-full flex items-center justify-center">
            <svg viewBox="0 0 6 8" className="w-[6px] h-2" aria-hidden="true">
              <path d="M1 0l4 4-4 4" fill="none" stroke="#444" strokeWidth="1.600" />
            </svg>
          </button>
        </div>
      </div>
    </section>
  );
}

function ResourceTab({ name, height }: { name: string; height: string }) {
  return (
    <button aria-label={name} className={height + " w-6 shrink-0 flex items-center ml-px"}>
      <Icon name={name} />
    </button>
  );
}

function ResourceBar() {
  return (
    <nav className="w-5 shrink-0 flex flex-col bg-[#dadada] overflow-hidden">
      <div className="border-l border-b border-[#b4b4b4]">
        <ResourceTab name="gear" height="h-[26px]" />
        <div className="pt-4">
          <ResourceTab name="resAssembly" height="h-[42px]" />
          <ResourceTab name="resConstraint" height="h-[42px]" />
          <ResourceTab name="resPart" height="h-[40px]" />
        </div>
      </div>
      <div className="bg-white pl-px">
        <ResourceTab name="resOperation" height="h-[43px]" />
      </div>
      <div className="flex-1 border-l border-t border-[#b4b4b4]">
        <ResourceTab name="resMachine" height="h-[40px]" />
        <ResourceTab name="resReuse" height="h-[42px]" />
        <ResourceTab name="resLibrary" height="h-[43px]" />
        <ResourceTab name="resInfo" height="h-[66px]" />
        <ResourceTab name="resPage" height="h-[42px]" />
        <ResourceTab name="resClock" height="h-[64px]" />
        <ResourceTab name="resColors" height="h-[22px]" />
        <div className="pt-[10px]">
          <ResourceTab name="resWizard" height="h-[42px]" />
          <ResourceTab name="resRobot" height="h-[42px]" />
          <ResourceTab name="resDoor" height="h-[41px]" />
          <ResourceTab name="resDialog" height="h-[41px]" />
        </div>
        <svg viewBox="0 0 8 60" className="w-2 h-[60px] ml-[9px] -mt-2" aria-hidden="true">
          <path d="M1 5l3-3 3 3zM1 7h6M1 22l3-3 3 3z" fill="#aaa" stroke="#aaa" strokeWidth="0.600" />
          <path d="M1 35l3 3 3-3zM1 52l3 3 3-3zM1 50h6" fill="#222" stroke="#222" strokeWidth="0.600" />
        </svg>
      </div>
    </nav>
  );
}

function BottomToolbar() {
  return (
    <footer className="h-7 shrink-0 overflow-hidden bg-white">
      <div className="flex items-center h-[34px]">
        <button aria-label="more" className="w-4 h-5 mr-1 shrink-0 flex items-center justify-center border border-l-0 border-[#a5a5a5]">
          <Triangle />
        </button>
        <Tool name="layerStack" />
        <button aria-label="layer settings" className="w-[31px] h-[31px] shrink-0 flex items-center justify-center">
          <Icon name="layerStack" />
        </button>
        <Drop />
        <Tool name="wcs" />
        <Drop />
        <Divider />
        {tools("pickFace palette")}
        <Divider />
        <Tool name="playFace" />
        <Drop />
        <Divider />
        <Tool name="spring" />
        <Drop />
        <Tool name="ruler" />
        <Drop low />
        <Divider />
        <Grip />
        <Tool name="colorMap" />
        <Drop />
        <Tool name="plus" />
        <Drop />
        <Tool name="extrudeUp" />
        <Drop />
        {tools("cylinder layersBody crate")}
        <Drop />
        <Drop low />
        <Divider />
      </div>
    </footer>
  );
}

function App() {
  return (
    <div className="relative h-screen flex flex-col overflow-hidden bg-white font-['Noto_Sans','Noto_Sans_CJK_SC',sans-serif]">
      <header className="shrink-0 border-b-2 border-[#a9aca9]">
        <UpperEdge />
        <MainToolbar />
        <SelectionBar />
      </header>
      <div className="flex-1 min-h-0 flex">
        <Viewport />
        <MachiningBar />
        <Navigator />
        <ResourceBar />
      </div>
      <BottomToolbar />
      <div className="absolute left-[1435px] right-0 bottom-[5px] overflow-hidden whitespace-nowrap text-[#9c9c9c]/80 pointer-events-none">
        <p className="text-[19px] leading-7">激活 Windows</p>
        <p className="text-[14px] leading-5">转到“设置”以激活 Windows。</p>
      </div>
    </div>
  );
}

export default App;
